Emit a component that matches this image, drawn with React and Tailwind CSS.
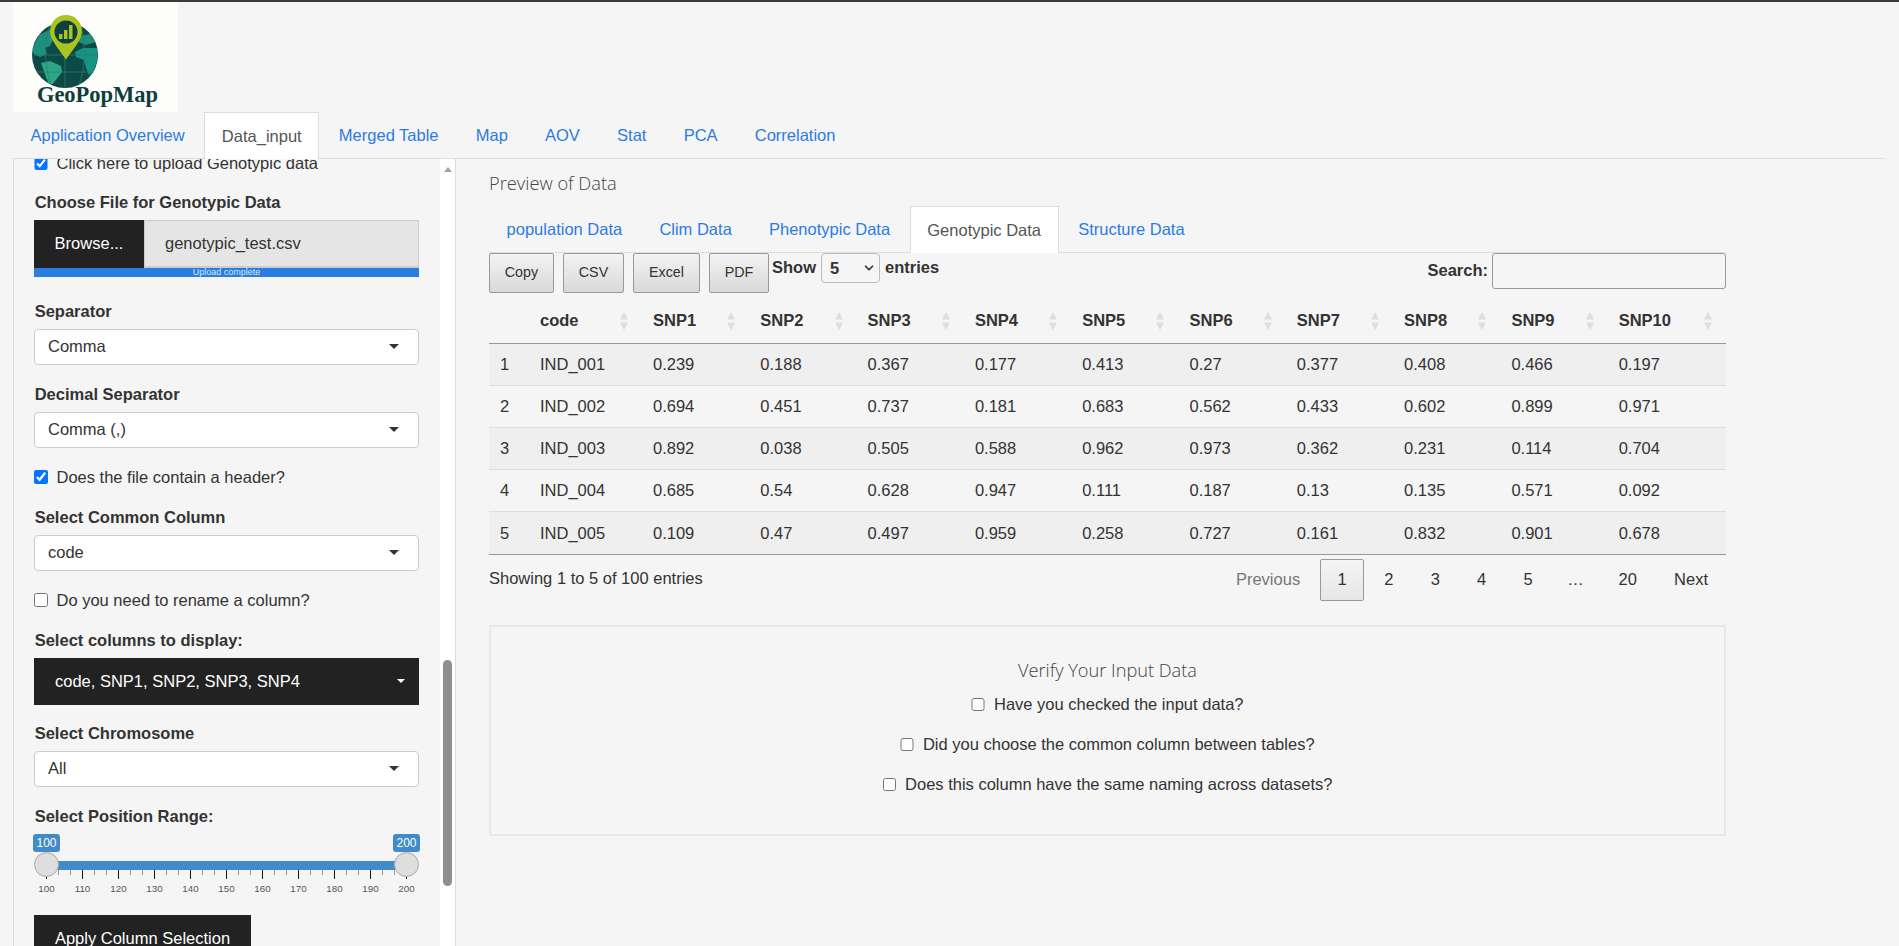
import { ChevronDown } from "lucide-react";

const SANS = "font-['Liberation_Sans',Arial,sans-serif]";
const HEAD = "font-['Open_Sans',sans-serif] font-light";

const rows = [
  ["1", "IND_001", "0.239", "0.188", "0.367", "0.177", "0.413", "0.27", "0.377", "0.408", "0.466", "0.197"],
  ["2", "IND_002", "0.694", "0.451", "0.737", "0.181", "0.683", "0.562", "0.433", "0.602", "0.899", "0.971"],
  ["3", "IND_003", "0.892", "0.038", "0.505", "0.588", "0.962", "0.973", "0.362", "0.231", "0.114", "0.704"],
  ["4", "IND_004", "0.685", "0.54", "0.628", "0.947", "0.111", "0.187", "0.13", "0.135", "0.571", "0.092"],
  ["5", "IND_005", "0.109", "0.47", "0.497", "0.959", "0.258", "0.727", "0.161", "0.832", "0.901", "0.678"],
];
const columns = ["code", "SNP1", "SNP2", "SNP3", "SNP4", "SNP5", "SNP6", "SNP7", "SNP8", "SNP9", "SNP10"];
const mainTabs = ["Application Overview", "Data_input", "Merged Table", "Map", "AOV", "Stat", "PCA", "Correlation"];
const dataTabs = ["population Data", "Clim Data", "Phenotypic Data", "Genotypic Data", "Structure Data"];
const ticks = [100, 110, 120, 130, 140, 150, 160, 170, 180, 190, 200];

function Logo() {
  return (
    <div className="flex h-[110px] w-[165px] shrink-0 flex-col bg-[#fdfdfb]">
      <svg viewBox="0 0 165 86" className="h-[86px] w-[165px] shrink-0">
        <defs>
          <clipPath id="globe">
            <circle cx="52" cy="53" r="32.5" />
          </clipPath>
        </defs>
        <circle cx="52" cy="53" r="33" fill="#0d4a45" />
        <g clipPath="url(#globe)">
          <path d="M19 46 L26 33 L38 27 L41 36 L37 44 L32 46 L34 52 L27 55 L21 52 Z" fill="#1f8f7c" />
          <path d="M28 61 L37 59 L48 64 L49 70 L42 79 L37 85 L33 75 Z" fill="#2aa886" />
          <path d="M62 50 L70 46 L86 46 L88 56 L84 68 L76 73 L73 66 L71 58 L63 55 Z" fill="#169382" />
          <path d="M66 34 L78 32 L84 40 L72 43 L66 40 Z" fill="#1f8f7c" />
          <path d="M20 53 H85 M22 70 H82 M52 20 V86 M36 24 Q28 54 38 84 M68 24 Q76 54 66 84" fill="none" stroke="#2d7f72" strokeWidth="0.7" />
        </g>
        <path d="M53 13 C43.5 13 37 20.5 37 29.5 C37 38 46 47 53 57.5 C60 47 69 38 69 29.5 C69 20.5 62.5 13 53 13 Z" fill="#a9c41f" />
        <circle cx="53" cy="30" r="11.5" fill="#0d3f3c" />
        <path d="M46 32 h3.5 v5 h-3.5 Z M51 28 h3.5 v9 h-3.5 Z M56 23 h3.5 v14 h-3.5 Z" fill="#a9c41f" />
      </svg>
      <span className="-mt-[6px] ml-[4px] text-center font-['Liberation_Serif',serif] text-[22.5px] leading-[26px] font-bold text-[#0f3d3a]">GeoPopMap</span>
    </div>
  );
}

function Check({ checked }) {
  return <input type="checkbox" defaultChecked={checked} className="m-0 h-[13.5px] w-[13.5px] shrink-0" />;
}

function CheckRow({ label, checked, className = "" }) {
  return (
    <label className={`flex h-[23px] items-center gap-[9px] pt-[1px] ${className}`}>
      <Check checked={checked} />
      <span>{label}</span>
    </label>
  );
}

function FieldLabel({ children }) {
  return <div className="mb-[5.5px] h-[24px] pt-[1px] pl-[0.7px] leading-[23px] font-bold">{children}</div>;
}

function SelectBox({ value }) {
  return (
    <div className="flex h-9 w-[385px] items-center justify-between rounded border border-[#ccc] bg-white pr-[19px] pl-[13px]">
      <span>{value}</span>
      <span className="h-0 w-0 border-x-[5px] border-t-[5px] border-x-transparent border-t-[#333]" />
    </div>
  );
}

function RangeSlider() {
  return (
    <div className="relative w-[385px]">
      <div className="-mx-px flex justify-between">
        <span className="h-[18px] w-[27px] rounded-[3px] bg-[#428bca] text-center text-[12px] leading-[18px] text-white">100</span>
        <span className="h-[18px] w-[27px] rounded-[3px] bg-[#428bca] text-center text-[12px] leading-[18px] text-white">200</span>
      </div>
      <div className="mx-[12px] mt-[9px] h-[9px] bg-[#428bca]" />
      <svg viewBox="0 0 385 10" className="block h-[10px] w-[385px]">
        {Array.from({ length: 31 }, (_, i) => {
          const major = i % 3 === 0;
          return (
            <line
              key={i}
              x1={12.5 + i * 12}
              x2={12.5 + i * 12}
              y1="0"
              y2={major ? 9 : 5}
              stroke={major ? "#111" : "#999"}
              strokeWidth="1"
            />
          );
        })}
      </svg>
      <div className="mt-[3px] flex w-[396px] -translate-x-[5.5px] text-[9.8px] leading-[12px] text-[#555]">
        {ticks.map((t) => (
          <span key={t} className="w-[36px] text-center">{t}</span>
        ))}
      </div>
      {/* handles */}
      <span className="absolute top-[18px] left-0 h-[25px] w-[25px] rounded-full border border-[#aaa] bg-[#dedede]" />
      <span className="absolute top-[18px] right-0 h-[25px] w-[25px] rounded-full border border-[#aaa] bg-[#dedede]" />
    </div>
  );
}

function Sidebar() {
  return (
    <aside className="flex h-[787px] w-[443px] shrink-0 overflow-hidden border-x border-[#ddd]">
      <div className="flex w-[426px] flex-col pl-[20px] text-[16.5px] text-[#333]">
        <CheckRow className="-mt-[7.5px]" label="Click here to upload Genotypic data" checked />

        <div className="mt-[15.5px]">
          <FieldLabel>Choose File for Genotypic Data</FieldLabel>
          <div className="mt-[0.5px] flex h-[48px] w-[385px]">
            <div className="flex w-[110px] items-center justify-center bg-[#222] text-white">Browse...</div>
            <div className="flex flex-1 items-center border border-b-2 border-[#ccc] bg-[#e5e5e5] pl-[20px]">genotypic_test.csv</div>
          </div>
          <div className="h-[9px] w-[385px] bg-[#2a7de1] text-center text-[9px] leading-[9px] text-[#d9e8fb]">Upload complete</div>
        </div>

        <div className="mt-[22.5px]">
          <FieldLabel>Separator</FieldLabel>
          <SelectBox value="Comma" />
        </div>

        <div className="mt-[17.5px]">
          <FieldLabel>Decimal Separator</FieldLabel>
          <SelectBox value="Comma (,)" />
        </div>

        <CheckRow className="mt-[17.5px]" label="Does the file contain a header?" checked />

        <div className="mt-[17px]">
          <FieldLabel>Select Common Column</FieldLabel>
          <SelectBox value="code" />
        </div>

        <CheckRow className="mt-[17.5px]" label="Do you need to rename a column?" />

        <div className="mt-[17px]">
          <FieldLabel>Select columns to display:</FieldLabel>
          <div className="flex h-[47px] w-[385px] items-center justify-between bg-[#222] pr-[14px] pl-[21px] text-white">
            <span>code, SNP1, SNP2, SNP3, SNP4</span>
            <span className="h-0 w-0 border-x-[4px] border-t-[4px] border-x-transparent border-t-white" />
          </div>
        </div>

        <div className="mt-[16.5px]">
          <FieldLabel>Select Chromosome</FieldLabel>
          <SelectBox value="All" />
        </div>

        <div className="mt-[17.5px]">
          <FieldLabel>Select Position Range:</FieldLabel>
          <RangeSlider />
        </div>

        <button className="mt-[20px] flex h-[48px] w-[217px] shrink-0 items-center justify-center bg-[#222] text-white">
          Apply Column Selection
        </button>
      </div>

      {/* scrollbar */}
      <div className="flex w-[15px] shrink-0 flex-col items-center bg-white">
        <span className="mt-[8px] h-0 w-0 border-x-[4.5px] border-b-[5px] border-x-transparent border-b-[#a3a3a3]" />
        <span className="mt-[488px] h-[226px] w-[9px] rounded-[5px] bg-[#8e8e8e]" />
      </div>
    </aside>
  );
}

function ExportButton({ label, width }) {
  return (
    <button className={`h-10 rounded-[2px] border border-[#999] bg-gradient-to-b from-[#f3f3f3] to-[#d9d9d9] text-[14.3px] text-[#333] ${width}`}>
      {label}
    </button>
  );
}

function SortArrows() {
  return (
    <svg viewBox="0 0 8 18" className="h-[18px] w-[8px]">
      <path d="M4 0 L8 7.5 H0 Z M4 18 L8 10.5 H0 Z" fill="#dedede" />
    </svg>
  );
}

function DataTable() {
  return (
    <table className="w-[1237px] table-fixed border-collapse">
      <colgroup>
        <col className="w-[40px]" />
        <col className="w-[113px]" />
        {columns.slice(1, 10).map((c) => (
          <col key={c} className="w-[107.3px]" />
        ))}
        <col />
      </colgroup>
      <thead>
        <tr className="border-b border-[#999]">
          <th className="h-[50px]" />
          {columns.map((c) => (
            <th key={c} className="h-[50px] pt-[6px] pr-[14px] pl-[11px] text-left font-bold">
              <div className="flex items-center justify-between">
                <span>{c}</span>
                <SortArrows />
              </div>
            </th>
          ))}
        </tr>
      </thead>
      <tbody>
        {rows.map((r, i) => (
          <tr key={r[0]} className={`border-b ${i === 4 ? "h-[43.2px] border-[#999]" : "h-[42.2px] border-[#ddd]"} ${i % 2 === 0 ? "bg-[#efefef]" : ""}`}>
            {r.map((v, j) => (
              <td key={j} className="px-[11px]">{v}</td>
            ))}
          </tr>
        ))}
      </tbody>
    </table>
  );
}

function Pagination() {
  return (
    <div className="flex items-center text-center">
      <span className="mr-[1px] flex h-[42px] items-center px-[18px] pb-[2px] text-[#777]">Previous</span>
      <span className="mx-[1px] flex h-[42px] w-[44px] items-center justify-center rounded-[2px] border border-[#999] bg-gradient-to-b from-[#f5f5f5] to-[#e6e6e6] pb-[2px]">1</span>
      {["2", "3", "4", "5"].map((p) => (
        <span key={p} className="ml-[1.2px] flex h-[42px] items-center px-[18px] pb-[2px]">{p}</span>
      ))}
      <span className="ml-[1.2px] flex h-[42px] items-center px-[15.5px] pb-[2px]">…</span>
      {["20", "Next"].map((p) => (
        <span key={p} className="ml-[1.2px] flex h-[42px] items-center px-[18px] pb-[2px]">{p}</span>
      ))}
    </div>
  );
}

export default function App() {
  return (
    <div className={`flex h-screen w-full flex-col overflow-hidden border-t-2 border-[#3a3a3a] bg-[#f5f5f5] pr-[14px] pl-[13px] ${SANS}`}>
      <Logo />

      <nav className="flex h-[47px] shrink-0 border-b border-[#ddd] text-[16.5px] text-[#2c7be5]">
        {mainTabs.map((t) =>
          t === "Data_input" ? (
            <span key={t} className="mr-[2px] flex h-[47px] items-center border border-b-0 border-[#ddd] bg-white px-[16.6px] text-[#555]">{t}</span>
          ) : (
            <span key={t} className="mr-[2px] flex h-[46px] items-center border border-transparent px-[16.6px]">{t}</span>
          )
        )}
      </nav>

      <div className="flex flex-1">
        <Sidebar />

        <main className="ml-[33px] w-[1237px] text-[16.5px] text-[#333]">
          <h4 className={`mt-[12px] text-[18.3px] leading-[24px] text-[#444] ${HEAD}`}>Preview of Data</h4>

          <div className="mt-[11px] flex h-[47px] border-b border-[#ddd] text-[#2c7be5]">
            {dataTabs.map((t) =>
              t === "Genotypic Data" ? (
                <span key={t} className="mr-[2px] flex h-[47px] items-center border border-b-0 border-[#ddd] bg-white px-[16.6px] text-[#555]">{t}</span>
              ) : (
                <span key={t} className="mr-[2px] flex h-[46px] items-center border border-transparent px-[16.6px]">{t}</span>
              )
            )}
          </div>

          <div className="flex h-10 items-start justify-between">
            <div className="flex items-start">
              <div className="flex gap-[9px]">
                <ExportButton label="Copy" width="w-[65px]" />
                <ExportButton label="CSV" width="w-[61px]" />
                <ExportButton label="Excel" width="w-[67px]" />
                <ExportButton label="PDF" width="w-[60px]" />
              </div>
              <label className="ml-[3px] flex h-[30px] items-center font-bold">
                <span className="-mt-[2px]">Show</span>
                <span className="relative mx-[5px] flex h-[30px] w-[59px] items-center rounded-[4px] border border-[#bbb] pl-[8px]">
                  5
                  <ChevronDown size={14} strokeWidth={3} className="absolute right-[3px] text-[#333]" />
                </span>
                <span className="-mt-[2px]">entries</span>
              </label>
            </div>
            <label className="flex items-center gap-[4px] font-bold">
              <span className="-mt-[2px]">Search:</span>
              <input className="h-[36px] w-[234px] rounded-[3px] border border-[#999] bg-transparent" />
            </label>
          </div>

          <DataTable />

          <div className="flex items-start justify-between">
            <span className="mt-[12px] leading-[23px]">Showing 1 to 5 of 100 entries</span>
            <div className="mt-[4px]">
              <Pagination />
            </div>
          </div>

          <section className="mt-[24px] flex h-[211px] flex-col items-center border-2 border-[#e8e8e8]">
            <h4 className={`mt-[31px] text-[18.2px] leading-[24px] text-[#444] ${HEAD}`}>Verify Your Input Data</h4>
            <CheckRow className="mt-[10px]" label="Have you checked the input data?" />
            <CheckRow className="mt-[17px]" label="Did you choose the common column between tables?" />
            <CheckRow className="mt-[17px]" label="Does this column have the same naming across datasets?" />
          </section>
        </main>
      </div>
    </div>
  );
}
